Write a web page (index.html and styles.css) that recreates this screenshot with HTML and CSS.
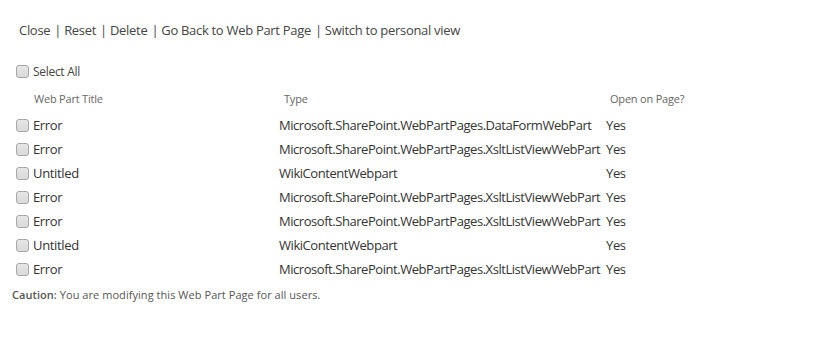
FILE: index.html
```html
<!DOCTYPE html>
<html>
<head>
<meta charset="utf-8">
<link rel="stylesheet" href="styles.css">
</head>
<body>
<div class="page">
  <nav class="toolbar">
    <a>Close</a><span class="sep">|</span><a>Reset</a><span class="sep">|</span><a>Delete</a><span class="sep">|</span><a>Go Back to Web Part Page</a><span class="sep">|</span><a>Switch to personal view</a>
  </nav>
  <label class="select-all"><span class="cb"></span>Select All</label>
  <div class="grid">
    <div class="hd hd-title">Web Part Title</div>
    <div class="hd hd-type">Type</div>
    <div class="hd hd-open">Open on Page?</div>

    <div class="c-title"><span class="cb"></span>Error</div>
    <div class="c-type">Microsoft.SharePoint.WebPartPages.DataFormWebPart</div>
    <div class="c-open">Yes</div>

    <div class="c-title"><span class="cb"></span>Error</div>
    <div class="c-type">Microsoft.SharePoint.WebPartPages.XsltListViewWebPart</div>
    <div class="c-open">Yes</div>

    <div class="c-title"><span class="cb"></span>Untitled</div>
    <div class="c-type">WikiContentWebpart</div>
    <div class="c-open">Yes</div>

    <div class="c-title"><span class="cb"></span>Error</div>
    <div class="c-type">Microsoft.SharePoint.WebPartPages.XsltListViewWebPart</div>
    <div class="c-open">Yes</div>

    <div class="c-title"><span class="cb"></span>Error</div>
    <div class="c-type">Microsoft.SharePoint.WebPartPages.XsltListViewWebPart</div>
    <div class="c-open">Yes</div>

    <div class="c-title"><span class="cb"></span>Untitled</div>
    <div class="c-type">WikiContentWebpart</div>
    <div class="c-open">Yes</div>

    <div class="c-title"><span class="cb"></span>Error</div>
    <div class="c-type">Microsoft.SharePoint.WebPartPages.XsltListViewWebPart</div>
    <div class="c-open">Yes</div>
  </div>
  <p class="caution"><b>Caution:</b> You are modifying this Web Part Page for all users.</p>
</div>
</body>
</html>
```
FILE: styles.css
```css
html, body {
  margin: 0;
  padding: 0;
  background: #ffffff;
}
body {
  font-family: "Open Sans", "Noto Sans", sans-serif;
  color: #444444;
  width: 833px;
  height: 337px;
  overflow: hidden;
}
.page {
  padding: 20px 0 0 12px;
}
.toolbar {
  display: flex;
  align-items: center;
  padding-left: 7px;
  height: 20px;
  font-size: 13px;
  color: #444444;
  letter-spacing: -0.3px;
}
.toolbar a {
  color: #444444;
}
.sep {
  margin: 0 3px 0 4px;
  color: #444444;
}
.select-all {
  display: flex;
  align-items: center;
  margin-top: 22px;
  padding-left: 4px;
  height: 18px;
  font-size: 12px;
  color: #444444;
  letter-spacing: -0.3px;
}
.cb {
  display: inline-block;
  box-sizing: border-box;
  width: 13px;
  height: 13px;
  border: 1px solid #a6a6a6;
  border-radius: 3px;
  background: linear-gradient(#e6e6e6, #d9d9d9);
  margin-right: 4px;
  flex: none;
}
.grid {
  display: grid;
  grid-template-columns: 263px 327px auto;
  grid-template-rows: 29px;
  grid-auto-rows: 24px;
  margin-top: 4px;
  padding-left: 4px;
  font-size: 13px;
  color: #333333;
  letter-spacing: -0.35px;
}
.grid > div {
  display: flex;
  align-items: center;
  white-space: nowrap;
}
.c-type {
  letter-spacing: -0.45px;
}
.hd {
  font-size: 11px;
  color: #666666;
  letter-spacing: -0.2px;
}
.hd-title { padding-left: 18px; }
.hd-type { padding-left: 5px; }
.hd-open { padding-left: 4px; }
.caution {
  margin: 6px 0 0 0;
  font-size: 11px;
  color: #555555;
  letter-spacing: 0.05px;
}
.caution b {
  font-weight: 600;
  color: #555555;
}
```
